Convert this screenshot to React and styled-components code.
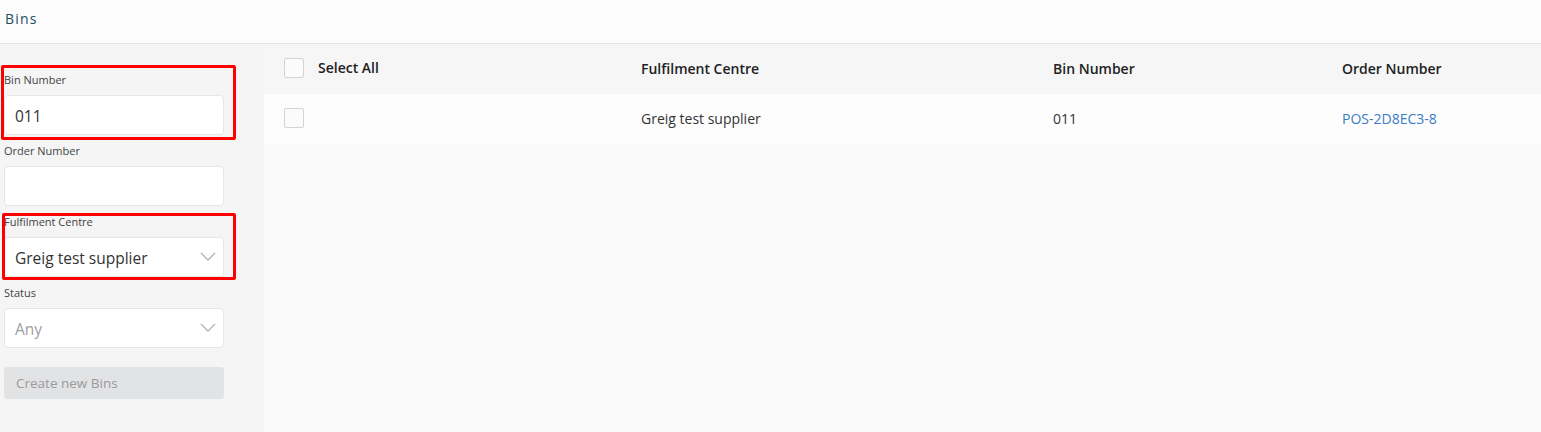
import React from 'react';
import styled, { createGlobalStyle } from 'styled-components';

const GlobalStyle = createGlobalStyle`
  html, body {
    margin: 0;
    padding: 0;
    background: #fafafa;
    font-family: 'Open Sans', 'Noto Sans', sans-serif;
  }
  * { box-sizing: border-box; }
`;

const Chevron = () => (
  <svg width='16' height='10' viewBox='0 0 16 10'>
    <polyline points='1,1 8,8 15,1' fill='none' stroke='#b5b5b5' strokeWidth='1.4' />
  </svg>
);

const App = () => {
  return (
    <Page>
      <GlobalStyle />
      <TopBar>
        <h1>Bins</h1>
      </TopBar>
      <Body>
        <Sidebar>
          <Field>
            <Mark $top={-7} $left={-3} $right={-12} $bottom={-5} />
            <Label>Bin Number</Label>
            <Input>011</Input>
          </Field>
          <Field>
            <Label>Order Number</Label>
            <Input />
          </Field>
          <Field>
            <Mark $top={-1} $left={-2} $right={-12} $bottom={-3} />
            <Label>Fulfilment Centre</Label>
            <Input>
              Greig test supplier
              <Chevron />
            </Input>
          </Field>
          <Field>
            <Label>Status</Label>
            <Input $muted>
              Any
              <Chevron />
            </Input>
          </Field>
          <CreateButton>Create new Bins</CreateButton>
        </Sidebar>
        <Main>
          <Row $head>
            <CheckCell>
              <Box />
              <span>Select All</span>
            </CheckCell>
            <Cell>Fulfilment Centre</Cell>
            <Cell>Bin Number</Cell>
            <Cell>Order Number</Cell>
          </Row>
          <Row>
            <CheckCell>
              <Box />
            </CheckCell>
            <Cell>Greig test supplier</Cell>
            <Cell>011</Cell>
            <Cell>
              <OrderLink>POS-2D8EC3-8</OrderLink>
            </Cell>
          </Row>
        </Main>
      </Body>
    </Page>
  );
};

const Page = styled.div`
  min-height: 432px;
  display: flex;
  flex-direction: column;
`;

const TopBar = styled.header`
  height: 44px;
  background: #fcfcfc;
  border-bottom: 1px solid #e2e2e2;
  display: flex;
  align-items: center;
  padding: 0 5px 6px;
  h1 {
    margin: 0;
    font-size: 14px;
    font-weight: 400;
    letter-spacing: 1.2px;
    color: #1b4f63;
  }
`;

const Body = styled.div`
  flex: 1;
  display: flex;
  min-height: 388px;
`;

const Sidebar = styled.aside`
  width: 264px;
  flex-shrink: 0;
  background: #f5f5f5;
  padding: 20px 40px 0 4px;
  display: flex;
  flex-direction: column;
`;

const Field = styled.div`
  position: relative;
  padding-top: 8px;
  display: flex;
  flex-direction: column;
`;

const Mark = styled.div`
  position: absolute;
  top: ${(p) => p.$top + 8}px;
  left: ${(p) => p.$left}px;
  right: ${(p) => p.$right}px;
  bottom: ${(p) => p.$bottom}px;
  border: 3px solid #ff0000;
  border-radius: 2px;
  pointer-events: none;
`;

const Label = styled.label`
  font-size: 11px;
  line-height: 16px;
  color: #444;
  margin-bottom: 7px;
`;

const Input = styled.div`
  height: 40px;
  background: #fff;
  border: 1px solid #e6e6e6;
  border-radius: 4px;
  display: flex;
  align-items: center;
  justify-content: space-between;
  padding: 2px 7px 0 10px;
  font-size: 15.5px;
  color: ${(p) => (p.$muted ? '#a0a0a0' : '#333')};
  svg {
    margin-bottom: 2px;
  }
`;

const CreateButton = styled.button`
  margin-top: 19px;
  height: 32px;
  border: none;
  border-radius: 3px;
  background: #e2e3e5;
  color: #9a9a9a;
  font-family: inherit;
  font-size: 13.5px;
  text-align: left;
  padding: 0 12px;
`;

const Main = styled.main`
  flex: 1;
  background: #fafafa;
`;

const Row = styled.div`
  display: grid;
  grid-template-columns: 377px 412px 289px 1fr;
  align-items: center;
  height: 50px;
  padding-bottom: 2px;
  background: ${(p) => (p.$head ? '#f6f6f6' : '#fdfdfd')};
  font-size: 14px;
  font-weight: ${(p) => (p.$head ? 600 : 400)};
  color: ${(p) => (p.$head ? '#222' : '#333')};
`;

const CheckCell = styled.div`
  display: flex;
  align-items: center;
  gap: 14px;
  padding-left: 20px;
  span {
    margin-bottom: 1px;
  }
`;

const Cell = styled.div``;

const Box = styled.span`
  width: 20px;
  height: 20px;
  border: 1px solid #d4d4d4;
  border-radius: 2px;
  background: #fbfbfb;
`;

const OrderLink = styled.a`
  color: #3a7bc8;
  text-decoration: none;
  cursor: pointer;
`;

export default App;
